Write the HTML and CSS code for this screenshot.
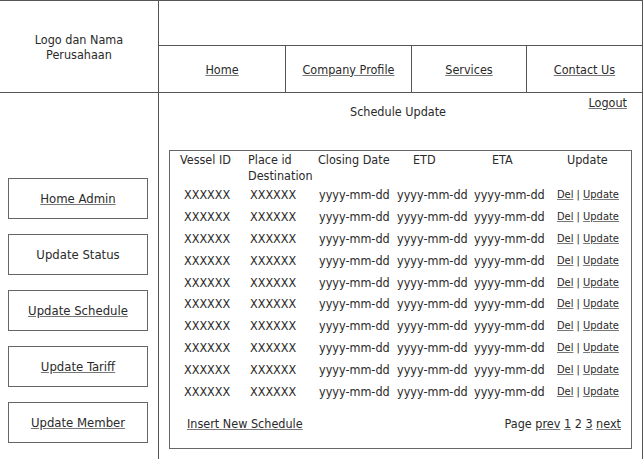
FILE: index.html
```html
<!DOCTYPE html>
<html lang="id">
<head>
    <meta charset="UTF-8">
    <meta name="viewport" content="width=device-width, initial-scale=1.0">
    <title>Schedule Update</title>
    <link rel="stylesheet" href="styles.css">
</head>
<body>
    <div class="frame">
        <div class="brand">Logo dan Nama<br>Perusahaan</div>

        <div class="masthead">
            <div class="masthead-top"></div>
            <nav class="nav">
                <a href="#">Home</a>
                <a href="#">Company Profile</a>
                <a href="#">Services</a>
                <a href="#">Contact Us</a>
            </nav>
        </div>

        <aside class="sidebar">
            <a class="side-btn" href="#">Home Admin</a>
            <span class="side-btn">Update Status</span>
            <a class="side-btn" href="#">Update Schedule</a>
            <a class="side-btn" href="#">Update Tariff</a>
            <a class="side-btn" href="#">Update Member</a>
        </aside>

        <main class="content">
            <div class="content-head">
                <span></span>
                <h1 class="title">Schedule Update</h1>
                <a class="logout" href="#">Logout</a>
            </div>

            <div class="schedule-box">
                <div class="sched-head">
                    <div>Vessel ID</div>
                    <div>Place id<br>Destination</div>
                    <div>Closing Date</div>
                    <div>ETD</div>
                    <div>ETA</div>
                    <div>Update</div>
                </div>
                <div id="schedRows"></div>
                <div class="sched-foot">
                    <a href="#">Insert New Schedule</a>
                    <span>Page <a href="#">prev</a> <a href="#">1</a> 2 <a href="#">3</a> <a href="#">next</a></span>
                </div>
            </div>
        </main>
    </div>

    <script>
        const rows = document.getElementById("schedRows");
        for (let i = 0; i < 10; i++) {
            rows.innerHTML += `
                <div class="sched-row">
                    <div>XXXXXX</div>
                    <div>XXXXXX</div>
                    <div>yyyy-mm-dd</div>
                    <div>yyyy-mm-dd</div>
                    <div>yyyy-mm-dd</div>
                    <div class="actions"><a href="#">Del</a> | <a href="#">Update</a></div>
                </div>
            `;
        }
    </script>
</body>
</html>
```

FILE: styles.css
```css
body {
    margin: 0;
    font-family: "DejaVu Sans Condensed", "DejaVu Sans", sans-serif;
    font-stretch: condensed;
    font-size: 12.5px;
    color: #2a2a2a;
    background: #fff;
}
a {
    color: inherit;
    text-decoration: underline;
    text-decoration-color: #777;
}
.frame {
    box-sizing: border-box;
    width: 643px;
    height: 459px;
    border-top: 1px solid #555;
    border-right: 1px solid #555;
    display: grid;
    grid-template-columns: 159px 1fr;
    grid-template-rows: 92px 1fr;
}
.brand {
    border-right: 1px solid #555;
    border-bottom: 1px solid #555;
    display: flex;
    align-items: center;
    justify-content: center;
    text-align: center;
    line-height: 15px;
}
.masthead {
    border-bottom: 1px solid #555;
    display: grid;
    grid-template-rows: 45px 1fr;
}
.masthead-top {
    border-bottom: 1px solid #555;
}
.nav {
    display: grid;
    grid-template-columns: 126px 126px 115px 1fr;
}
.nav a {
    display: flex;
    align-items: center;
    justify-content: center;
}
.nav a + a {
    border-left: 1px solid #555;
}
.sidebar {
    border-right: 1px solid #555;
    padding: 85px 0 0 8px;
    display: flex;
    flex-direction: column;
    gap: 15px;
}
.side-btn {
    box-sizing: border-box;
    width: 140px;
    height: 41px;
    border: 1px solid #666;
    display: flex;
    align-items: center;
    justify-content: center;
    font-size: 13px;
}
.content {
    padding: 2px 10px 0 10px;
}
.content-head {
    display: grid;
    grid-template-columns: 1fr auto 1fr;
    line-height: 15px;
    margin-right: 5px;
}
.title {
    margin: 0;
    padding-top: 9px;
    font-size: 12.5px;
    font-weight: normal;
}
.logout {
    justify-self: end;
}
.schedule-box {
    box-sizing: border-box;
    height: 299px;
    margin-top: 31px;
    border: 1px solid #666;
}
.sched-head {
    display: grid;
    grid-template-columns: 68px 70px 95px 79px 75px 1fr;
    padding: 1px 0 0 10px;
    line-height: 16px;
}
.sched-row {
    display: grid;
    grid-template-columns: 66px 69px 78px 77px 83px 1fr;
    padding-left: 14px;
    height: 21.8px;
    align-items: center;
}
.actions {
    font-size: 11px;
}
.sched-foot {
    display: flex;
    justify-content: space-between;
    padding: 0 10px 0 17px;
    margin-top: 14px;
    line-height: 16px;
}
```
